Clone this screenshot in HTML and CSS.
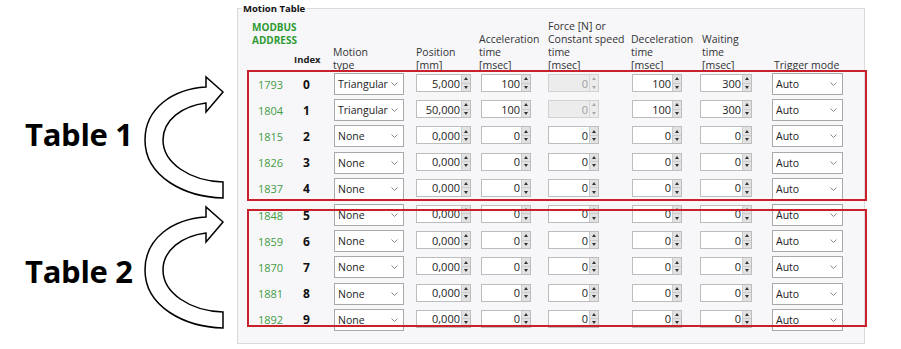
FILE: index.html
```html
<!DOCTYPE html>
<html lang="en">
<head>
    <meta charset="UTF-8">
    <meta name="viewport" content="width=device-width, initial-scale=1.0">
    <title>Motion Table</title>
    <link rel="stylesheet" href="styles.css">
</head>
<body>
    <div class="callouts">
        <div class="callout callout-1">
            <div class="callout-label">Table 1</div>
            <svg width="86" height="126" viewBox="0 0 86 126">
                <path class="arrow" d="M83,123 C45,122 5,102 5,65 C5,33 33,14 66,12 L66,2 L83,17 L66,37 L66,28 C42,31 23,45 23,65 C23,88 50,106 83,107 Z"/>
            </svg>
        </div>
        <div class="callout callout-2">
            <div class="callout-label">Table 2</div>
            <svg width="86" height="126" viewBox="0 0 86 126">
                <path class="arrow" d="M83,123 C45,122 5,102 5,65 C5,33 33,14 66,12 L66,2 L83,17 L66,37 L66,28 C42,31 23,45 23,65 C23,88 50,106 83,107 Z"/>
            </svg>
        </div>
    </div>

    <fieldset class="panel">
        <legend>Motion Table</legend>

        <div class="grid-row head">
            <div class="h-addr">MODBUS<br>ADDRESS</div>
            <div class="h-idx">Index</div>
            <div class="h h-type">Motion<br>type</div>
            <div class="h">Position<br>[mm]</div>
            <div class="h h-acc">Acceleration<br>time<br>[msec]</div>
            <div class="h">Force [N] or<br>Constant speed<br>time<br>[msec]</div>
            <div class="h h-dec">Deceleration<br>time<br>[msec]</div>
            <div class="h h-wait">Waiting<br>time<br>[msec]</div>
            <div class="h h-trig">Trigger mode</div>
        </div>

        <div id="rows"></div>
    </fieldset>

    <div class="mark mark-1"></div>
    <div class="mark mark-2"></div>

    <script>
        const rows = [
            { addr: 1793, type: 'Triangular', pos: '5,000', acc: 100, force: 0, dec: 100, wait: 300, off: true },
            { addr: 1804, type: 'Triangular', pos: '50,000', acc: 100, force: 0, dec: 100, wait: 300, off: true },
            { addr: 1815, type: 'None', pos: '0,000', acc: 0, force: 0, dec: 0, wait: 0 },
            { addr: 1826, type: 'None', pos: '0,000', acc: 0, force: 0, dec: 0, wait: 0 },
            { addr: 1837, type: 'None', pos: '0,000', acc: 0, force: 0, dec: 0, wait: 0 },
            { addr: 1848, type: 'None', pos: '0,000', acc: 0, force: 0, dec: 0, wait: 0 },
            { addr: 1859, type: 'None', pos: '0,000', acc: 0, force: 0, dec: 0, wait: 0 },
            { addr: 1870, type: 'None', pos: '0,000', acc: 0, force: 0, dec: 0, wait: 0 },
            { addr: 1881, type: 'None', pos: '0,000', acc: 0, force: 0, dec: 0, wait: 0 },
            { addr: 1892, type: 'None', pos: '0,000', acc: 0, force: 0, dec: 0, wait: 0 }
        ];

        const chev = '<svg class="chev" width="7" height="4" viewBox="0 0 7 4"><path d="M0.5 0.5 L3.5 3.5 L6.5 0.5"/></svg>';

        function combo(cls, text) {
            return `<div class="combo ${cls}"><span>${text}</span>${chev}</div>`;
        }

        function spin(cls, value, off) {
            return `<div class="spin ${cls}${off ? ' off' : ''}">` +
                `<input type="text" value="${value}" readonly${off ? ' disabled' : ''}>` +
                `<span class="btns"><i class="up"></i><i class="dn"></i></span></div>`;
        }

        document.getElementById('rows').innerHTML = rows.map((r, i) => `
            <div class="grid-row row">
                <span class="addr">${r.addr}</span>
                <span class="idx">${i}</span>
                ${combo('w-type', r.type)}
                ${spin('w-pos', r.pos)}
                ${spin('w-acc', r.acc)}
                ${spin('w-force', r.force, r.off)}
                ${spin('w-dec', r.dec)}
                ${spin('w-wait', r.wait)}
                ${combo('w-trig', 'Auto')}
            </div>`).join('');
    </script>
</body>
</html>
```

FILE: styles.css
```css
* {
    box-sizing: border-box;
}
body {
    margin: 0;
    padding-top: 1px;
    height: 349px;
    overflow: hidden;
    position: relative;
    display: flex;
    align-items: flex-start;
    background: #fff;
    font-family: "Open Sans", Arial, sans-serif;
    color: #222;
}

/* left side annotations */
.callouts {
    width: 237px;
    flex: none;
    padding-top: 74px;
}
.callout {
    display: flex;
    align-items: center;
    height: 126px;
}
.callout + .callout {
    margin-top: 4px;
}
.callout-label {
    width: 140px;
    padding-left: 25px;
    font-size: 31px;
    font-weight: 700;
    line-height: 32px;
    letter-spacing: -0.3px;
    color: #000;
    white-space: nowrap;
}
.callout-1 .callout-label {
    padding-bottom: 8px;
}
.callout-2 .callout-label {
    padding-top: 6px;
}
.callout svg {
    flex: none;
}
.arrow {
    fill: #fff;
    stroke: #000;
    stroke-width: 1.5;
    stroke-linejoin: miter;
}

/* motion table panel */
.panel {
    width: 628px;
    height: 343px;
    margin: 0;
    padding: 4px 0 0 14px;
    border: 1px solid #d9d9de;
    background: #f7f7fa;
}
.panel legend {
    margin-left: -11px;
    padding: 0 2px;
    font-size: 9.5px;
    font-weight: 700;
    line-height: 15px;
    color: #111;
}
.grid-row {
    display: grid;
    grid-template-columns: 38px 44px 82px 65px 67px 84px 68px 72px 73px;
}
.head {
    height: 51px;
}
.h {
    align-self: end;
    margin-bottom: 1px;
    font-size: 10.5px;
    line-height: 13px;
    color: #333;
    white-space: nowrap;
}
.h-type,
.h-dec {
    margin-left: -1px;
}
.h-acc {
    margin-left: -2px;
}
.h-wait,
.h-trig {
    padding-left: 2px;
}
.h-addr {
    align-self: start;
    margin-top: 1px;
    font-size: 10px;
    font-weight: 700;
    line-height: 13px;
    color: #2f9a34;
    white-space: nowrap;
}
.h-idx {
    align-self: end;
    margin-bottom: 7px;
    padding-left: 4px;
    font-size: 9.5px;
    font-weight: 700;
    line-height: 12px;
    color: #222;
}

.row {
    height: 26.2px;
    align-items: start;
}
.addr {
    align-self: center;
    padding-left: 6px;
    font-size: 11px;
    color: #449c44;
}
.idx {
    align-self: center;
    padding-left: 13px;
    font-size: 12px;
    font-weight: 700;
    color: #111;
}

.combo {
    margin-top: 2px;
    height: 22px;
    display: flex;
    align-items: center;
    justify-content: space-between;
    padding: 0 5px 0 3px;
    border: 1px solid #a9a9a9;
    background: #fff;
    font-size: 10.5px;
    color: #222;
}
.chev {
    flex: none;
}
.chev path {
    fill: none;
    stroke: #8a8a8a;
    stroke-width: 1;
}
.w-type {
    width: 70px;
}
.w-trig {
    width: 71px;
}

.spin {
    margin-top: 3px;
    height: 18px;
    display: flex;
    border: 1px solid #bdbdbd;
    background: #fff;
}
.spin input {
    flex: 1;
    min-width: 0;
    border: 0;
    padding: 0 1px 0 0;
    background: transparent;
    font-family: inherit;
    font-size: 11px;
    text-align: right;
    color: #222;
}
.btns {
    width: 9px;
    flex: none;
    display: flex;
    flex-direction: column;
    background: #e2e2e2;
    border-left: 1px solid #cbcbcb;
}
.btns i {
    flex: 1;
    display: flex;
    align-items: center;
    justify-content: center;
}
.btns i::before {
    content: "";
    border-left: 2px solid transparent;
    border-right: 2px solid transparent;
}
.btns .up::before {
    border-bottom: 3px solid #333;
}
.btns .dn {
    border-top: 1px solid #cbcbcb;
}
.btns .dn::before {
    border-top: 3px solid #333;
}
.spin.off {
    background: #ececec;
    border-color: #d2d2d2;
}
.spin.off input {
    color: #a0a0a0;
}
.spin.off .btns {
    background: #ececec;
    border-left-color: #d8d8d8;
}
.spin.off .btns .dn {
    border-top-color: #ececec;
}
.spin.off .btns .up::before {
    border-bottom-color: #aaa;
}
.spin.off .btns .dn::before {
    border-top-color: #aaa;
}
.w-pos {
    width: 55px;
}
.w-acc {
    width: 50px;
}
.w-force {
    width: 51px;
}
.w-dec {
    width: 50px;
}
.w-wait {
    width: 52px;
}

/* red table outlines drawn over the rows */
.mark {
    position: absolute;
    left: 247px;
    width: 620px;
    border: 2px solid #c9212b;
    pointer-events: none;
}
.mark-1 {
    top: 70px;
    height: 131px;
}
.mark-2 {
    top: 209px;
    height: 118px;
}
```
